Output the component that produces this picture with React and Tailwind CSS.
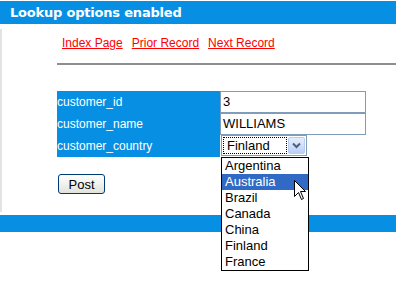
import React from "react";

const countries = ["Argentina", "Australia", "Brazil", "Canada", "China", "Finland", "France"];

const App = () => {
  return (
    <div className="relative w-[396px] h-[281px] overflow-hidden bg-white font-['Liberation_Sans',Arial,sans-serif]">
      {/* Title bar */}
      <div className="mt-px h-[23px] bg-[#078fe4] pl-[10px] font-['DejaVu_Sans',Verdana,sans-serif] text-[13px] font-bold leading-[23px] tracking-[-0.2px] text-white">
        Lookup options enabled
      </div>

      {/* Body */}
      <div className="mt-[5px] flex h-[183px] flex-col border-l-2 border-[#e3e3e3]">
        <div className="flex gap-[9px] pl-[60px] pt-[7px] text-[12px] leading-[14px] text-[#f00]">
          <a href="#" className="underline">Index Page</a>
          <a href="#" className="underline">Prior Record</a>
          <a href="#" className="underline">Next Record</a>
        </div>

        <div className="ml-[55px] mt-[13px] h-[2px] bg-[#8e8e8e]" />

        {/* Record form */}
        <div className="ml-[55px] mt-[26px] grid grid-cols-[163px_146px]">
          <div className="h-[22px] bg-[#078fe4] text-[12px] leading-[22px] text-white">customer_id</div>
          <div className="h-[22px] border border-[#7f9db9] pl-[2px] text-[13px] leading-[20px] text-black">3</div>

          <div className="h-[22px] bg-[#078fe4] text-[12px] leading-[22px] text-white">customer_name</div>
          <div className="h-[22px] border border-[#7f9db9] pl-[2px] text-[13px] leading-[20px] text-black">WILLIAMS</div>

          <div className="h-[22px] bg-[#078fe4] text-[12px] leading-[22px] text-white">customer_country</div>
          <div className="h-[22px]">
            <div className="relative ml-px flex h-[21px] w-[86px] border border-[#7f9db9] bg-white p-px">
              <div className="flex-1 border border-dotted border-black pl-[3px] text-[13px] leading-[15px] text-black">
                Finland
              </div>
              <div className="ml-px flex w-[17px] items-center justify-center rounded-[2px] border border-[#b9cdf3] bg-gradient-to-b from-[#e6eefc] to-[#bcd0f6]">
                <svg width="9" height="7" viewBox="0 0 9 7">
                  <path d="M1 1.5 L4.5 5 L8 1.5" fill="none" stroke="#4d6185" strokeWidth="2" />
                </svg>
              </div>

              {/* Open list */}
              <div className="absolute left-[-1px] top-[21px] z-10 w-[88px] border border-black bg-white">
                {countries.map((c) => (
                  <div
                    key={c}
                    className={
                      c === "Australia"
                        ? "h-[16px] bg-[#316ac5] pl-[3px] text-[13px] leading-[16px] text-white"
                        : "h-[16px] pl-[3px] text-[13px] leading-[16px] text-black"
                    }
                  >
                    {c}
                  </div>
                ))}
              </div>
            </div>
          </div>
        </div>

        <button className="ml-[56px] mt-[17px] h-[20px] w-[47px] rounded-[3px] border border-[#003c74] bg-gradient-to-b from-white to-[#e3e3db] text-[13px] leading-[17px] text-black">
          Post
        </button>
      </div>

      {/* Footer bar */}
      <div className="mt-[3px] h-[17px] bg-[#078fe4]" />

      {/* Mouse pointer */}
      <svg className="absolute left-[294px] top-[180px] z-20" width="13" height="21" viewBox="0 0 13 21">
        <path d="M0.5 0.5 L0.5 16.5 L4.5 12.5 L7.5 19.5 L9.5 18.5 L6.5 11.5 L11.5 11.5 Z" fill="white" stroke="black" strokeWidth="1" />
      </svg>
    </div>
  );
};

export default App;
